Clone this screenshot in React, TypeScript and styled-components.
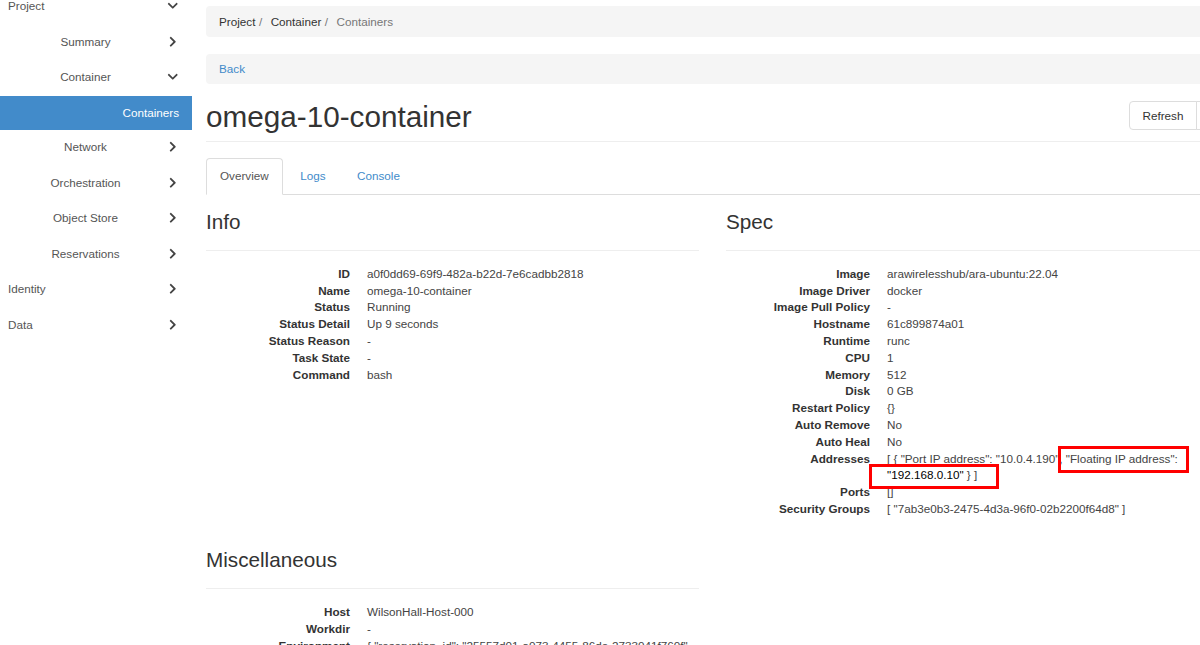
import React from "react";
import styled, { createGlobalStyle } from "styled-components";
import { FaChevronDown, FaChevronRight } from "react-icons/fa";

const GlobalStyle = createGlobalStyle`
  html, body {
    margin: 0;
    height: 645px;
    overflow: hidden;
    background: #fff;
  }
  body {
    font-family: "Liberation Sans", Arial, sans-serif;
    font-size: 11.7px;
    color: #333;
  }
`;

const Page = styled.div`
  display: flex;
  align-items: flex-start;
  width: 1219px;
  margin-top: -12px;
`;

const Sidebar = styled.nav`
  flex: 0 0 192px;
  display: flex;
  flex-direction: column;
`;

const NavRow = styled.div<{ $level: number }>`
  display: flex;
  align-items: center;
  height: 35.5px;
  padding: 0 12px 0 8px;
  box-sizing: border-box;
  color: #555;
`;

const NavLabel = styled.span<{ $level: number }>`
  flex: 1;
  text-align: ${(p) => (p.$level === 0 ? "left" : "center")};
`;

const ActiveRow = styled.div`
  height: 34px;
  margin: 1.5px 0 -1px;
  padding-right: 13px;
  background: #428bca;
  color: #fff;
  line-height: 34px;
  text-align: right;
`;

const Chevron = styled.span`
  display: flex;
  justify-content: center;
  flex: 0 0 14px;
  margin-left: 3px;
  color: #444;
  font-size: 11.5px;
`;

const Main = styled.main`
  flex: 1;
  min-width: 0;
  padding: 18px 0 0 14px;
`;

const Bar = styled.div<{ $height: number }>`
  display: flex;
  align-items: center;
  height: ${(p) => p.$height}px;
  padding: 0 13px;
  background: #f5f5f5;
  border-radius: 4px;
`;

const Crumb = styled.span`
  color: #333;
`;

const CrumbSep = styled.span`
  padding: 0 8.5px 0 3.5px;
  color: #777;
`;

const CrumbActive = styled.span`
  color: #777;
`;

const Link = styled.a`
  margin-top: -2px;
  color: #428bca;
  text-decoration: none;
`;

const BackBar = styled(Bar)`
  margin-top: 17px;
`;

const TitleRow = styled.div`
  display: flex;
  align-items: flex-end;
  justify-content: space-between;
  height: 58px;
  padding-bottom: 11px;
  box-sizing: border-box;
  border-bottom: 1px solid #eee;
`;

const Title = styled.h1`
  margin: 0 0 -4px;
  font-size: 29.7px;
  font-weight: 400;
  line-height: 34px;
  color: #333;
`;

const ButtonGroup = styled.div`
  display: flex;
  height: 29px;
  margin-right: 1px;
`;

const RefreshButton = styled.button`
  width: 68px;
  padding: 0;
  border: 1px solid #ddd;
  border-radius: 4px 0 0 4px;
  background: #fff;
  color: #333;
  font: inherit;
`;

const CaretButton = styled.button`
  width: 22px;
  margin-left: -1px;
  border: 1px solid #ddd;
  border-radius: 0 4px 4px 0;
  background: #fff;
`;

const Tabs = styled.div`
  display: flex;
  height: 36px;
  margin-top: 16px;
  border-bottom: 1px solid #ddd;
`;

const Tab = styled.div<{ $active?: boolean }>`
  display: flex;
  align-items: center;
  height: 37px;
  margin-right: 3.5px;
  padding: 0 13px 2px;
  border: 1px solid ${(p) => (p.$active ? "#ddd" : "transparent")};
  border-bottom-color: ${(p) => (p.$active ? "#fff" : "transparent")};
  border-radius: 4px 4px 0 0;
  background: ${(p) => (p.$active ? "#fff" : "transparent")};
  color: ${(p) => (p.$active ? "#555" : "#428bca")};
  box-sizing: border-box;
`;

const Columns = styled.div`
  display: grid;
  grid-template-columns: 493px 493px;
  column-gap: 27px;
`;

const Section = styled.section`
  position: relative;
`;

const Heading = styled.h3`
  height: 56px;
  margin: 0 0 14.8px;
  padding-top: 14px;
  box-sizing: border-box;
  border-bottom: 1px solid #eee;
  font-size: 20.7px;
  font-weight: 400;
  line-height: 26px;
  color: #333;
`;

const MiscSection = styled(Section)`
  margin-top: 15.5px;
`;

const Details = styled.dl<{ $offset?: number }>`
  display: grid;
  grid-template-columns: 144px 1fr;
  column-gap: 17px;
  margin: ${(p) => p.$offset ?? 0}px 0 0;
  line-height: 16.8px;
`;

const Term = styled.dt`
  font-weight: 700;
  text-align: right;
  white-space: nowrap;
`;

const Value = styled.dd`
  margin: 0;
  color: #444;
`;

const Strong = styled.span`
  color: #000;
`;

const Callout = styled.div<{ $x: number; $y: number; $w: number; $h: number }>`
  position: absolute;
  left: ${(p) => p.$x}px;
  top: ${(p) => p.$y}px;
  width: ${(p) => p.$w}px;
  height: ${(p) => p.$h}px;
  box-sizing: border-box;
  border: 3px solid #f00;
  pointer-events: none;
`;

type Item = { label: string; level: number; open?: boolean; active?: boolean };

const navItems: Item[] = [
  { label: "Project", level: 0, open: true },
  { label: "Summary", level: 1 },
  { label: "Container", level: 1, open: true },
  { label: "Containers", level: 2, active: true },
  { label: "Network", level: 1 },
  { label: "Orchestration", level: 1 },
  { label: "Object Store", level: 1 },
  { label: "Reservations", level: 1 },
  { label: "Identity", level: 0 },
  { label: "Data", level: 0 },
];

const info = [
  ["ID", "a0f0dd69-69f9-482a-b22d-7e6cadbb2818"],
  ["Name", "omega-10-container"],
  ["Status", "Running"],
  ["Status Detail", "Up 9 seconds"],
  ["Status Reason", "-"],
  ["Task State", "-"],
  ["Command", "bash"],
];

const misc = [
  ["Host", "WilsonHall-Host-000"],
  ["Workdir", "-"],
  ["Environment", '{ "reservation_id": "25557d01-a073-4455-86de-2733041f760f"'],
];

const specBefore = [
  ["Image", "arawirelesshub/ara-ubuntu:22.04"],
  ["Image Driver", "docker"],
  ["Image Pull Policy", "-"],
  ["Hostname", "61c899874a01"],
  ["Runtime", "runc"],
  ["CPU", "1"],
  ["Memory", "512"],
  ["Disk", "0 GB"],
  ["Restart Policy", "{}"],
  ["Auto Remove", "No"],
  ["Auto Heal", "No"],
];

function Rows({ rows }: { rows: string[][] }) {
  return (
    <>
      {rows.map(([term, value]) => (
        <React.Fragment key={term}>
          <Term>{term}</Term>
          <Value>{value}</Value>
        </React.Fragment>
      ))}
    </>
  );
}

export default function App() {
  return (
    <Page>
      <GlobalStyle />
      <Sidebar>
        {navItems.map((item) =>
          item.active ? (
            <ActiveRow key={item.label}>{item.label}</ActiveRow>
          ) : (
            <NavRow key={item.label} $level={item.level}>
              <NavLabel $level={item.level}>{item.label}</NavLabel>
              <Chevron>{item.open ? <FaChevronDown /> : <FaChevronRight />}</Chevron>
            </NavRow>
          )
        )}
      </Sidebar>
      <Main>
        <Bar $height={31}>
          <Crumb>Project</Crumb>
          <CrumbSep>/</CrumbSep>
          <Crumb>Container</Crumb>
          <CrumbSep>/</CrumbSep>
          <CrumbActive>Containers</CrumbActive>
        </Bar>
        <BackBar $height={30}>
          <Link>Back</Link>
        </BackBar>
        <TitleRow>
          <Title>omega-10-container</Title>
          <ButtonGroup>
            <RefreshButton>Refresh</RefreshButton>
            <CaretButton />
          </ButtonGroup>
        </TitleRow>
        <Tabs>
          <Tab $active>Overview</Tab>
          <Tab>Logs</Tab>
          <Tab>Console</Tab>
        </Tabs>
        <Columns>
          <Section>
            <Heading>Info</Heading>
            <Details>
              <Rows rows={info} />
            </Details>
          </Section>
          <Section>
            <Heading>Spec</Heading>
            <Details>
              <Rows rows={specBefore} />
              <Term>Addresses</Term>
              <Value>
                {'[ { "Port IP address": "10.0.4.190", "Floating IP address": '}
                <Strong>"192.168.0.10"</Strong>
                {" } ]"}
              </Value>
              <Term>Ports</Term>
              <Value>[]</Value>
              <Term>Security Groups</Term>
              <Value>[ "7ab3e0b3-2475-4d3a-96f0-02b2200f64d8" ]</Value>
            </Details>
            <Callout $x={332} $y={251} $w={131} $h={27} />
            <Callout $x={143} $y={269} $w={130} $h={25} />
          </Section>
          <MiscSection>
            <Heading>Miscellaneous</Heading>
            <Details $offset={2.5}>
              <Rows rows={misc} />
            </Details>
          </MiscSection>
        </Columns>
      </Main>
    </Page>
  );
}
